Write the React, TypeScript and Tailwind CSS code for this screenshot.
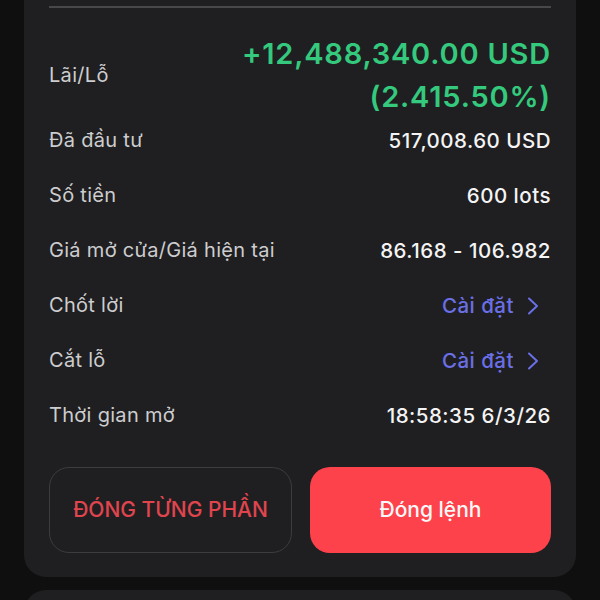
import React from "react";

const Chevron = () => (
  <svg width="20" height="20" viewBox="0 0 20 20" fill="none" className="ml-[9px] mr-[8px]">
    <path d="M6 2.5 L14 10 L6 17.5" stroke="#6a6fe6" strokeWidth="2" strokeLinecap="round" strokeLinejoin="round" />
  </svg>
);

const Row = ({ label, children }: { label: string; children: React.ReactNode }) => (
  <div className="flex items-center justify-between leading-[27px]">
    <span className="text-[20px] tracking-[0.3px] text-[#cdcdcf]">{label}</span>
    {children}
  </div>
);

export default function App() {
  return (
    <div
      className="w-[600px] h-[600px] overflow-hidden bg-[#0f0f0f]"
      style={{ fontFamily: "Inter, 'Noto Sans', sans-serif" }}
    >
      <div className="mx-[24px] mt-[-20px] rounded-[22px] bg-[#1f1f21] px-[25px] pt-[26px] pb-[24px]">
        <div className="h-[2px] bg-[#48484b]" />
        <div className="mt-[24px] flex items-center justify-between">
          <span className="text-[20px] tracking-[0.3px] text-[#cdcdcf]">Lãi/Lỗ</span>
          <div className="text-right text-[29px] font-semibold leading-[43px] tracking-[0.8px] text-[#34c97d]">
            <div>+12,488,340.00 USD</div>
            <div>(2.415.50%)</div>
          </div>
        </div>
        <div className="mt-[9px] flex flex-col gap-[28px]">
          <Row label="Đã đầu tư">
            <span className="text-[20.5px] font-medium tracking-[0.5px] text-[#f4f4f5]">517,008.60 USD</span>
          </Row>
          <Row label="Số tiền">
            <span className="text-[20.5px] font-medium tracking-[0.5px] text-[#f4f4f5]">600 lots</span>
          </Row>
          <Row label="Giá mở cửa/Giá hiện tại">
            <span className="text-[20.5px] font-medium tracking-[0.5px] text-[#f4f4f5]">86.168 - 106.982</span>
          </Row>
          <Row label="Chốt lời">
            <span className="flex items-center text-[20.5px] font-medium tracking-[0.5px] text-[#6a6fe6]">
              Cài đặt
              <Chevron />
            </span>
          </Row>
          <Row label="Cắt lỗ">
            <span className="flex items-center text-[20.5px] font-medium tracking-[0.5px] text-[#6a6fe6]">
              Cài đặt
              <Chevron />
            </span>
          </Row>
          <Row label="Thời gian mở">
            <span className="text-[20.5px] font-medium tracking-[0.5px] text-[#f4f4f5]">18:58:35 6/3/26</span>
          </Row>
        </div>
        <div className="mt-[38px] flex gap-[18px]">
          <button className="flex h-[86px] flex-1 items-center justify-center rounded-[20px] border border-[#3c3c3f] text-[21px] font-medium text-[#e0454e]">
            ĐÓNG TỪNG PHẦN
          </button>
          <button className="flex h-[86px] flex-1 items-center justify-center rounded-[20px] bg-[#fe424b] text-[21px] font-medium text-[#f8f8f8]">
            Đóng lệnh
          </button>
        </div>
      </div>
      <div className="mx-[24px] mt-[13px] h-[100px] rounded-[22px] bg-[#1f1f21]" />
    </div>
  );
}
